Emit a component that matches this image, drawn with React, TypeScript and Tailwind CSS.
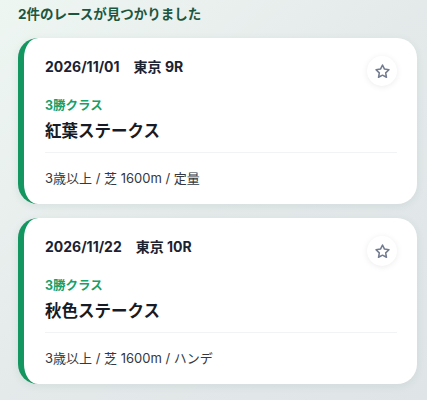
import React from 'react';

interface Race {
  id: number;
  date: string;
  venue: string;
  raceClass: string;
  name: string;
  conditions: string;
}

const races: Race[] = [
  { id: 1, date: '2026/11/01', venue: '東京 9R', raceClass: '3勝クラス', name: '紅葉ステークス', conditions: '3歳以上 / 芝 1600m / 定量' },
  { id: 2, date: '2026/11/22', venue: '東京 10R', raceClass: '3勝クラス', name: '秋色ステークス', conditions: '3歳以上 / 芝 1600m / ハンデ' },
];

const StarIcon: React.FC = () => (
  <svg width="17" height="17" viewBox="0 0 24 24" fill="none" stroke="#737c90" strokeWidth="2.2" strokeLinejoin="round">
    <path d="M12 2.8l2.8 5.8 6.3.9-4.6 4.4 1.1 6.3L12 17.2l-5.6 3 1.1-6.3-4.6-4.4 6.3-.9z" />
  </svg>
);

const RaceCard: React.FC<{ race: Race }> = ({ race }) => (
  <div className="rounded-[20px] border-l-[6px] border-[#13965f] bg-white pl-[21px] pr-5 pt-[18px] pb-[17px] shadow-[0_2px_8px_rgba(30,60,60,0.08)]">
    <div className="flex items-start justify-between">
      <div className="mt-px text-[14px] leading-5 font-bold text-[#1c2230]">
        {race.date}
        <span className="ml-[14px]">{race.venue}</span>
      </div>
      <button className="flex h-[30px] w-[30px] items-center justify-center rounded-full bg-white shadow-[0_1px_6px_rgba(0,0,0,0.08)]">
        <StarIcon />
      </button>
    </div>
    <div className="mt-3 text-[12.5px] leading-4 font-bold text-[#17a06a]">{race.raceClass}</div>
    <div className="mt-[5px] text-[16.5px] leading-6 font-bold text-[#161b26]">{race.name}</div>
    <div className="mt-[9px] h-px bg-[#f2f3f5]" />
    <div className="mt-4 text-[13px] leading-[18px] text-[#333843]">{race.conditions}</div>
  </div>
);

export default function App() {
  return (
    <div
      className="min-h-[400px] bg-gradient-to-br from-[#eef6f2] via-[#e4eaea] to-[#dfe5e7] pt-[6px] pb-4 pl-[18px] pr-[10px]"
      style={{ fontFamily: 'Inter, "Noto Sans CJK JP", sans-serif' }}
    >
      <h2 className="text-[13.5px] leading-4 font-bold text-[#1d5640]">2件のレースが見つかりました</h2>
      <div className="mt-4 flex flex-col gap-[14px]">
        {races.map((r) => (
          <RaceCard key={r.id} race={r} />
        ))}
      </div>
    </div>
  );
}
